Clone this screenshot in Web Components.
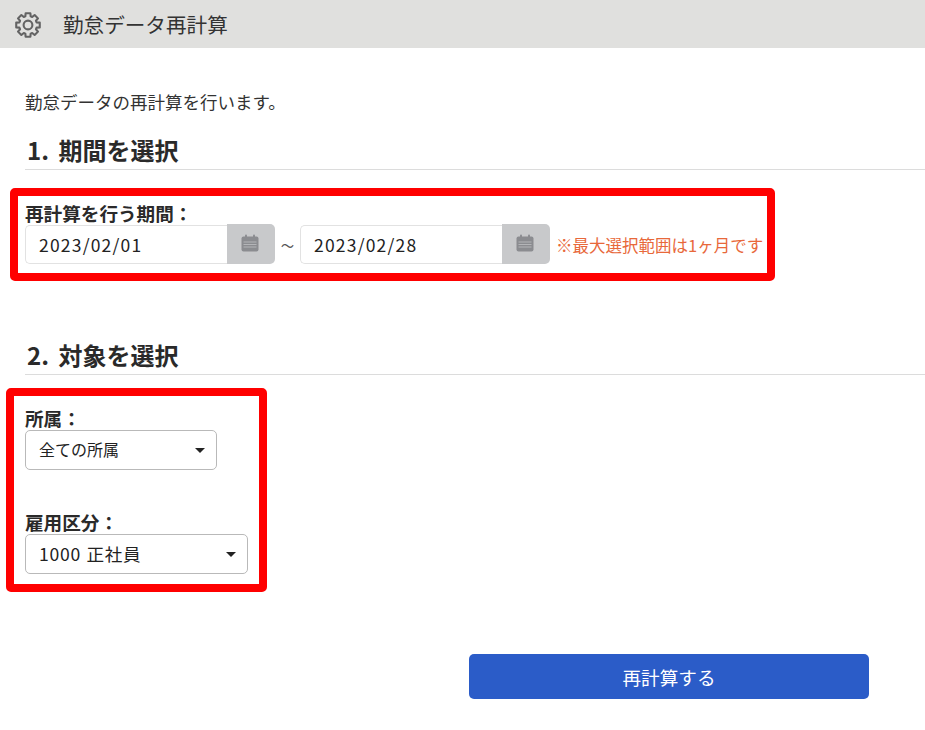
<!DOCTYPE html>
<html lang="ja">
<head>
<meta charset="utf-8">
<title>勤怠データ再計算</title>
<style>
  body {
    margin: 0;
    background: #fff;
    color: #262626;
    font-family: "Noto Sans CJK JP", "Noto Sans", sans-serif;
  }
</style>
</head>
<body>
<page-header>勤怠データ再計算</page-header>
<recalc-page></recalc-page>

<script>
class PageHeader extends HTMLElement {
  constructor() {
    super();
    this.attachShadow({ mode: "open" });
  }

  connectedCallback() {
    // cog outline, 8 teeth
    let points = [];
    for (let i = 0; i < 8; i++) {
      const a = (i * Math.PI) / 4;
      [[-0.3, 9], [-0.2, 12], [0.2, 12], [0.3, 9]].forEach(([d, r]) => {
        points.push(`${(13 + r * Math.sin(a + d)).toFixed(2)},${(13 - r * Math.cos(a + d)).toFixed(2)}`);
      });
    }
    this.shadowRoot.innerHTML = `
    <style>
      :host {
        display: flex;
        align-items: center;
        height: 48px;
        padding-left: 15px;
        background: #e0e0de;
        font-size: 20.6px;
        color: #333;
      }
      svg { width: 26px; height: 26px; margin-right: 22px; margin-top: 1px; }
    </style>
    <svg viewBox="0 0 26 26" fill="none" stroke="#636363" stroke-width="2.1" stroke-linejoin="round">
      <polygon points="${points.join(" ")}"></polygon>
      <circle cx="13" cy="13" r="4.4"></circle>
    </svg>
    <slot></slot>
  `;
  }
}

class SectionTitle extends HTMLElement {
  constructor() {
    super();
    this.attachShadow({ mode: "open" });
    this.shadowRoot.innerHTML = `
    <style>
      :host {
        display: block;
        height: 38px;
        line-height: 37px;
        padding-left: 2px;
        border-bottom: 1px solid #dcdcdc;
        font-size: 24px;
        font-weight: 700;
        word-spacing: 4px;
        color: #2a2a2a;
      }
    </style>
    <slot></slot>
  `;
  }
}

class RedFrame extends HTMLElement {
  constructor() {
    super();
    this.attachShadow({ mode: "open" });
    this.shadowRoot.innerHTML = `
    <style>
      :host {
        display: block;
        position: relative;
      }
      .mark {
        position: absolute;
        inset: var(--frame-inset);
        border: 8px solid #f00;
        border-radius: 5px;
        pointer-events: none;
      }
    </style>
    <slot></slot>
    <div class="mark"></div>
  `;
  }
}

class FieldLabel extends HTMLElement {
  constructor() {
    super();
    this.attachShadow({ mode: "open" });
    this.shadowRoot.innerHTML = `
    <style>
      :host {
        display: block;
        height: 24px;
        line-height: 23px;
        font-size: 18.6px;
        font-weight: 700;
        color: #2a2a2a;
      }
    </style>
    <slot></slot>
  `;
  }
}

class DateField extends HTMLElement {
  constructor() {
    super();
    this.attachShadow({ mode: "open" });
    this.shadowRoot.innerHTML = `
    <style>
      :host {
        display: flex;
        width: 250px;
        height: 39px;
        box-sizing: border-box;
        font-size: 17.5px;
        color: #222;
      }
      .value {
        flex: 1;
        box-sizing: border-box;
        padding-left: 13px;
        line-height: 37px;
        border: 1px solid #e2e2e2;
        border-right: 0;
        border-radius: 5px 0 0 5px;
        letter-spacing: 1.2px;
      }
      .btn {
        width: 48px;
        height: 40px;
        margin-top: -1px;
        display: flex;
        align-items: center;
        justify-content: center;
        background: #c8c9cb;
        border-radius: 0 5px 5px 0;
      }
      svg { width: 18px; height: 18px; margin: -2px 2px 0 0; }
    </style>
    <div class="value"><slot></slot></div>
    <div class="btn">
      <svg viewBox="0 0 18 18">
        <rect x="4" y="0.5" width="2" height="4" rx="1" fill="#8b8c90"></rect>
        <rect x="12" y="0.5" width="2" height="4" rx="1" fill="#8b8c90"></rect>
        <rect x="0.5" y="2.5" width="17" height="15" rx="2" fill="#8b8c90"></rect>
        <path d="M2.5 8h13M2.5 10.5h13M2.5 13h13" stroke="#b4b5b8" stroke-width="1"></path>
      </svg>
    </div>
  `;
  }
}

class SelectBox extends HTMLElement {
  constructor() {
    super();
    this.attachShadow({ mode: "open" });
    this.shadowRoot.innerHTML = `
    <style>
      :host {
        display: flex;
        align-items: center;
        justify-content: space-between;
        box-sizing: border-box;
        height: 40px;
        padding: 0 11px 0 13px;
        border: 1px solid #b9b9b9;
        border-radius: 5px;
        font-size: 16px;
        color: #222;
      }
      .text { margin-top: -2px; }
      .arrow {
        width: 0;
        height: 0;
        border-left: 5px solid transparent;
        border-right: 5px solid transparent;
        border-top: 5px solid #222;
      }
    </style>
    <span class="text"><slot></slot></span>
    <span class="arrow"></span>
  `;
  }
}

class RecalcPage extends HTMLElement {
  constructor() {
    super();
    this.attachShadow({ mode: "open" });
  }

  connectedCallback() {
    this.shadowRoot.innerHTML = `
    <style>
      :host { display: block; padding-left: 25px; }
      .intro { margin-top: 40px; height: 28px; line-height: 28px; font-size: 17.5px; color: #333; }
      .first { margin-top: 15px; }
      .period { margin-top: 31px; --frame-inset: -13px 150px -17px -15px; }
      .dates { display: flex; align-items: center; }
      .tilde { width: 25px; text-align: center; font-size: 27px; line-height: 39px; font-weight: 300; color: #555; }
      .note { margin-left: 6px; font-size: 16.5px; color: #e8683a; white-space: nowrap; }
      .second { margin-top: 72px; }
      .target { margin-top: 31px; width: 223px; --frame-inset: -18px -19px -18px -19px; }
      .short { width: 192px; }
      .long { font-size: 17.6px; letter-spacing: .7px; word-spacing: 1px; }
      .gap { margin-top: 40px; }
      .actions { display: flex; justify-content: flex-end; margin-top: 80px; padding-right: 56px; }
      button {
        width: 400px;
        height: 45px;
        border: 0;
        border-radius: 5px;
        background: #2b5cc8;
        color: #fff;
        font: inherit;
        font-size: 18.6px;
      }
    </style>
    <div class="intro">勤怠データの再計算を行います。</div>
    <section-title class="first">1. 期間を選択</section-title>
    <red-frame class="period">
      <field-label>再計算を行う期間：</field-label>
      <div class="dates">
        <date-field>2023/02/01</date-field>
        <span class="tilde">~</span>
        <date-field>2023/02/28</date-field>
        <span class="note">※最大選択範囲は1ヶ月です</span>
      </div>
    </red-frame>
    <section-title class="second">2. 対象を選択</section-title>
    <red-frame class="target">
      <field-label>所属：</field-label>
      <select-box class="short">全ての所属</select-box>
      <field-label class="gap">雇用区分：</field-label>
      <select-box class="long">1000 正社員</select-box>
    </red-frame>
    <div class="actions"><button type="button">再計算する</button></div>
  `;
  }
}

customElements.define("page-header", PageHeader);
customElements.define("section-title", SectionTitle);
customElements.define("red-frame", RedFrame);
customElements.define("field-label", FieldLabel);
customElements.define("date-field", DateField);
customElements.define("select-box", SelectBox);
customElements.define("recalc-page", RecalcPage);
</script>
</body>
</html>
